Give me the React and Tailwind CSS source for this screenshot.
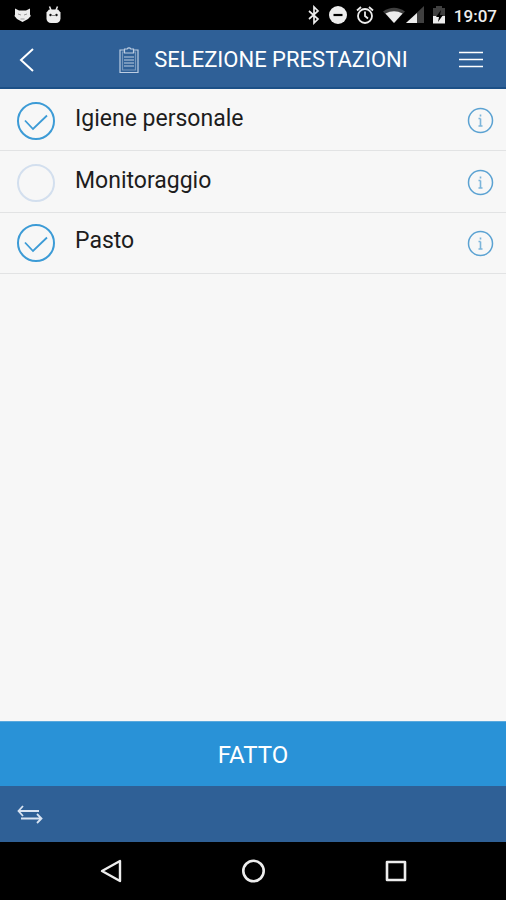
import { useState } from "react";

function StatusBar() {
  return (
    <div className="flex h-[30px] shrink-0 items-center justify-between bg-black pl-[14px] pr-[9px] text-[#ededed]">
      <div className="flex items-center gap-[14px]">
        <svg className="h-[18px] w-[17px]" viewBox="0 0 17 18" fill="currentColor" aria-hidden="true">
          <path d="M1 2.500 5 4.500h7l4-2v6l.8 1.500-2.800 3-5.500 3-5.500-3L.5 10 1 8.500z" />
          <path d="m4 8 3 1M13 8l-3 1M6.500 13h4" stroke="#999" strokeWidth="1" fill="none" />
        </svg>
        <svg className="h-[18px] w-[17px]" viewBox="0 0 17 18" fill="currentColor" aria-hidden="true">
          <path d="M4.500.5 6 4M12.500.5 11 4" stroke="currentColor" strokeWidth="1.500" />
          <path d="M4 3.500h9l2.500 3v6a4.500 4.500 0 0 1-4.500 4.500H6a4.500 4.500 0 0 1-4.500-4.500v-6z" />
          <circle cx="5.500" cy="9" r="1.200" fill="#111" />
          <circle cx="11.500" cy="9" r="1.200" fill="#111" />
          <path d="M7 9.500h3" stroke="#888" strokeWidth="1" />
        </svg>
      </div>
      <div className="flex items-center gap-2">
        <svg className="h-5 w-3" viewBox="0 0 12 20" fill="none" stroke="currentColor" strokeWidth="1.700" aria-hidden="true">
          <path d="m1 6 9 8-4 4V2l4 4-9 8" />
        </svg>
        <svg className="h-5 w-5" viewBox="0 0 20 20" aria-hidden="true">
          <circle cx="10" cy="10" r="9" fill="currentColor" />
          <path d="M5.500 10h9" stroke="#000" strokeWidth="2.200" />
        </svg>
        <svg className="h-5 w-[18px]" viewBox="0 0 18 20" fill="none" stroke="currentColor" strokeWidth="1.800" aria-hidden="true">
          <circle cx="9" cy="11" r="7" />
          <path d="M9 6.500V11l3 2.500M1 5.500l4-3.500M17 5.500 13 2" />
        </svg>
        <div className="flex items-center">
          <svg className="h-5 w-6" viewBox="0 0 24 20" aria-hidden="true">
            <path d="M1 6.500Q12-1 23 6.500L12 18z" fill="#404040" />
            <path d="M3.500 8.500q8.500-4.500 17 0L12 18z" fill="currentColor" />
          </svg>
          <svg className="h-5 w-[18px]" viewBox="0 0 18 20" aria-hidden="true">
            <path d="M18 1v17H0z" fill="#404040" />
            <path d="M11 8v10H0z" fill="currentColor" />
          </svg>
        </div>
        <svg className="h-5 w-[14px]" viewBox="0 0 14 20" aria-hidden="true">
          <path d="M4 1h6v2h3v8H1V3h3z" fill="#404040" />
          <path d="M1 11h12v7.500H1z" fill="currentColor" />
          <path d="M9 5 4 12h3l-1 5 5-7H8z" fill="#000" />
        </svg>
        <span className="pt-[2px] text-[17px] leading-5 font-medium">19:07</span>
      </div>
    </div>
  );
}

function Header() {
  return (
    <header className="flex h-[59px] shrink-0 items-center justify-between border-b-2 border-[#1c5087] bg-[#2f6097] pl-[14px] pr-[18px] pt-[2px] text-white">
      <button type="button" aria-label="Indietro" className="flex h-11 w-[34px] items-center justify-start pl-[5px]">
        <svg className="h-6 w-4" viewBox="0 0 16 24" fill="none" stroke="currentColor" strokeWidth="2" aria-hidden="true">
          <path d="M14 1 2 12 14 23" />
        </svg>
      </button>
      <div className="flex items-center gap-[14px] pl-6">
        <svg className="h-7 w-[22px]" viewBox="0 0 22 28" fill="none" stroke="#bdcde2" strokeWidth="1.200" aria-hidden="true">
          <path d="M6 4H2v22.500h18V4h-4M6.500 3h2.700a2 2 0 0 1 3.600 0h2.700v4h-9z" />
          <path d="M6 6H4.500v18h13V6H16" strokeOpacity=".5" />
          <path d="M6 11h10M6 14h10M6 17h10M6 20h10" />
        </svg>
        <h1 className="text-[22px] leading-7">SELEZIONE PRESTAZIONI</h1>
      </div>
      <button type="button" aria-label="Menu" className="flex h-11 w-[34px] items-center justify-end pr-[5px]">
        <svg className="h-5 w-6" viewBox="0 0 24 20" stroke="currentColor" strokeWidth="1.500" aria-hidden="true">
          <path d="M0 2.500h24M0 9.500h24M0 16.500h24" />
        </svg>
      </button>
    </header>
  );
}

function ServiceRow({ id, name, checked, onChange }) {
  return (
    <li className="flex h-[62px] items-center justify-between border-b border-[#e2e3e4] pl-[17px] pr-3 pt-[2px] last:h-[61px] last:pt-0">
      <div className="flex items-center gap-5">
        <span className="grid h-[38px] w-[38px] place-items-center">
          <input
            id={id}
            type="checkbox"
            checked={checked}
            onChange={onChange}
            className="peer col-start-1 row-start-1 h-[38px] w-[38px] appearance-none rounded-full border-2 border-[#d3dfee] checked:border-[#3c9bd6]"
          />
          <svg
            className="pointer-events-none invisible col-start-1 row-start-1 h-[38px] w-[38px] text-[#3c9bd6] peer-checked:visible"
            viewBox="0 0 38 38"
            fill="none"
            stroke="currentColor"
            strokeWidth="1.800"
            aria-hidden="true"
          >
            <path d="m8 18.500 8 8.500L30 13.500" />
          </svg>
        </span>
        <label htmlFor={id} className="pb-[4px] text-[23px] leading-7 text-[#1d1d1d]">
          {name}
        </label>
      </div>
      <button type="button" aria-label={"Informazioni: " + name} className="flex h-11 items-center">
        <svg className="h-[27px] w-[27px]" viewBox="0 0 27 27" fill="none" stroke="#5ba2d2" aria-hidden="true">
          <circle cx="13.500" cy="13.500" r="12" strokeWidth="1.500" />
          <path d="M13.500 11.500v7.500M11.500 11.500h2M11.500 19h4M13.500 7.500v2" strokeWidth="1.600" strokeOpacity=".8" />
        </svg>
      </button>
    </li>
  );
}

function NavBar() {
  return (
    <nav className="flex h-[58px] shrink-0 items-center justify-around bg-black px-[39px] text-[#ededed]">
      <button type="button" aria-label="Indietro (sistema)" className="flex h-12 w-12 items-center justify-center">
        <svg className="h-6 w-6" viewBox="0 0 24 24" fill="none" stroke="currentColor" strokeWidth="2.400" strokeLinejoin="round" aria-hidden="true">
          <path d="M22 2v20L4 12z" />
        </svg>
      </button>
      <button type="button" aria-label="Home" className="flex h-12 w-12 items-center justify-center">
        <svg className="h-6 w-6" viewBox="0 0 24 24" fill="none" stroke="currentColor" strokeWidth="2.600" aria-hidden="true">
          <circle cx="12.500" cy="12" r="10.200" />
        </svg>
      </button>
      <button type="button" aria-label="App recenti" className="flex h-12 w-12 items-center justify-center">
        <svg className="h-6 w-6" viewBox="0 0 24 24" fill="none" stroke="currentColor" strokeWidth="2.600" strokeLinejoin="round" aria-hidden="true">
          <path d="M3 3h18v18H3z" />
        </svg>
      </button>
    </nav>
  );
}

const initialServices = [
  { id: "igiene", name: "Igiene personale", checked: true },
  { id: "monitoraggio", name: "Monitoraggio", checked: false },
  { id: "pasto", name: "Pasto", checked: true },
];

export default function App() {
  const [services, setServices] = useState(initialServices);
  const toggle = (id) =>
    setServices(services.map((s) => (s.id === id ? { ...s, checked: !s.checked } : s)));

  return (
    <div className="flex min-h-screen flex-col bg-[#f7f7f7] font-[Roboto,sans-serif]">
      <StatusBar />
      <Header />
      <main className="flex grow flex-col">
        <ul className="grow">
          {services.map((s) => (
            <ServiceRow key={s.id} {...s} onChange={() => toggle(s.id)} />
          ))}
        </ul>
        <button type="button" className="h-[65px] w-full border-t border-[#5aa9dd] bg-[#2992d7] pt-[2px] text-[24px] leading-8 text-white">
          FATTO
        </button>
      </main>
      <footer className="flex h-14 shrink-0 items-center bg-[#2f6096] px-[17px] pt-[2px] text-[#d9e4f2]">
        <button type="button" aria-label="Scambia" className="flex h-11 items-center">
          <svg className="h-5 w-[26px]" viewBox="0 0 26 20" fill="none" stroke="currentColor" strokeWidth="1.800" aria-hidden="true">
            <path d="M22 6H1.500M6 1 1.500 6 6 11M4 13.500h20.500M20 9l4.500 4.500-4.500 4.500" />
          </svg>
        </button>
      </footer>
      <NavBar />
    </div>
  );
}
